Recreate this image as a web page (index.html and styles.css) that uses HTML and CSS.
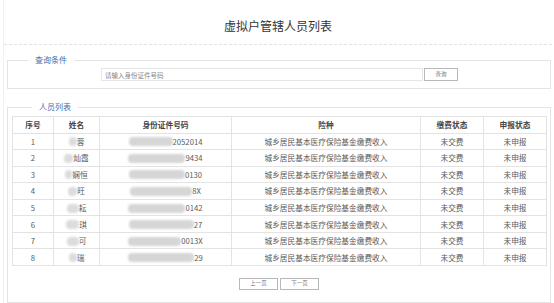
FILE: index.html
```html
<!DOCTYPE html>
<html lang="zh">
<head>
<meta charset="utf-8">
<title>虚拟户管辖人员列表</title>
<link rel="stylesheet" href="styles.css">
</head>
<body>
<div class="page">
  <h1 class="title">虚拟户管辖人员列表</h1>

  <fieldset class="box query">
    <legend>查询条件</legend>
    <div class="query-row">
      <input class="id-input" type="text" placeholder="请输入身份证件号码">
      <button class="btn" type="button">查询</button>
    </div>
  </fieldset>

  <fieldset class="box list">
    <legend>人员列表</legend>
    <table class="grid">
      <thead>
        <tr><th class="c1">序号</th><th class="c2">姓名</th><th class="c3">身份证件号码</th><th class="c4">险种</th><th class="c5">缴费状态</th><th class="c6">申报状态</th></tr>
      </thead>
      <tbody>
        <tr><td>1</td><td><span class="mask nm" style="width:8px"></span>蓉</td><td><span class="mask" style="width:44px"></span>2052014</td><td>城乡居民基本医疗保险基金缴费收入</td><td>未交费</td><td>未申报</td></tr>
        <tr><td>2</td><td><span class="mask nm" style="width:9px"></span>灿霞</td><td><span class="mask" style="width:57px"></span>9434</td><td>城乡居民基本医疗保险基金缴费收入</td><td>未交费</td><td>未申报</td></tr>
        <tr><td>3</td><td><span class="mask nm" style="width:7px"></span>娴恒</td><td><span class="mask" style="width:56px"></span>0130</td><td>城乡居民基本医疗保险基金缴费收入</td><td>未交费</td><td>未申报</td></tr>
        <tr><td>4</td><td><span class="mask nm" style="width:9px"></span>旺</td><td><span class="mask" style="width:62px"></span>8X</td><td>城乡居民基本医疗保险基金缴费收入</td><td>未交费</td><td>未申报</td></tr>
        <tr><td>5</td><td><span class="mask nm" style="width:12px"></span>耘</td><td><span class="mask" style="width:57px"></span>0142</td><td>城乡居民基本医疗保险基金缴费收入</td><td>未交费</td><td>未申报</td></tr>
        <tr><td>6</td><td><span class="mask nm" style="width:13px"></span>琪</td><td><span class="mask" style="width:65px"></span>27</td><td>城乡居民基本医疗保险基金缴费收入</td><td>未交费</td><td>未申报</td></tr>
        <tr><td>7</td><td><span class="mask nm" style="width:12px"></span>可</td><td><span class="mask" style="width:53px"></span>0013X</td><td>城乡居民基本医疗保险基金缴费收入</td><td>未交费</td><td>未申报</td></tr>
        <tr><td>8</td><td><span class="mask nm" style="width:8px"></span>瑞</td><td><span class="mask" style="width:66px"></span>29</td><td>城乡居民基本医疗保险基金缴费收入</td><td>未交费</td><td>未申报</td></tr>
      </tbody>
    </table>
    <div class="pager">
      <button class="btn page-btn" type="button">上一页</button>
      <button class="btn page-btn" type="button">下一页</button>
    </div>
  </fieldset>
</div>
</body>
</html>
```

FILE: styles.css
```css
* { box-sizing: border-box; }

html, body {
  margin: 0;
  padding: 0;
  background: #fff;
}

body {
  font-family: "Noto Sans CJK SC", "Liberation Sans", sans-serif;
  color: #555;
}

.page {
  margin-left: 3px;
  width: 549px;
  min-height: 303px;
  border-left: 1px solid #f0f0f0;
  padding-left: 3px;
}

.title {
  margin: 0 0 0 -3px;
  padding: 18px 0 11px;
  font-size: 12px;
  line-height: 15px;
  font-weight: normal;
  color: #333;
  text-align: center;
  border-bottom: 1px dashed #e2e2e2;
}

.box {
  margin: 0;
  padding: 0;
  width: 544px;
  border: 1px solid #e4e4e4;
  min-width: 0;
}

.box legend {
  margin-left: 20px;
  padding: 0 7px;
  font-size: 8px;
  line-height: 10px;
  color: #3d6fb4;
}

.query {
  margin-top: 10px;
  padding: 3px 0 7px;
}

.query-row {
  display: flex;
  align-items: center;
  padding-left: 93px;
}

.id-input {
  width: 322px;
  height: 13px;
  margin: 0;
  padding: 0 3px;
  border: 1px solid #e6e6e6;
  font-family: inherit;
  font-size: 6.5px;
  color: #555;
  outline: none;
}

.id-input::placeholder {
  color: #888;
}

.btn {
  margin: 0 0 0 1px;
  padding: 0;
  width: 34px;
  height: 13px;
  border: 1px solid #b9b9b9;
  background: #fff;
  font-family: inherit;
  font-size: 5.5px;
  color: #777;
  line-height: 1;
}

.list {
  margin-top: 13px;
  padding: 4px 4px 12px;
}

.grid {
  width: 534px;
  border-collapse: collapse;
  table-layout: fixed;
  font-size: 7.7px;
}

.grid th, .grid td {
  border: 1px solid #e3e3e3;
  padding: 0;
  height: 16.55px;
  text-align: center;
  vertical-align: middle;
  white-space: nowrap;
  overflow: hidden;
}

.grid th {
  color: #444;
  font-weight: bold;
}

.grid td {
  color: #5a5a5a;
}

.c1 { width: 41px; }
.c2 { width: 46px; }
.c3 { width: 132px; }
.c4 { width: 189px; }
.c5 { width: 63px; }
.c6 { width: 63px; }

.mask {
  display: inline-block;
  height: 9px;
  vertical-align: -1.5px;
  background: #d6d6d6;
  border-radius: 4px;
  filter: blur(1.2px);
}

.mask.nm {
  background: #dcdcdc;
}

.pager {
  display: flex;
  justify-content: center;
  gap: 2px;
  margin-top: 12px;
}

.page-btn {
  margin: 0;
  width: 39px;
  height: 12px;
  font-size: 5.5px;
}
```
